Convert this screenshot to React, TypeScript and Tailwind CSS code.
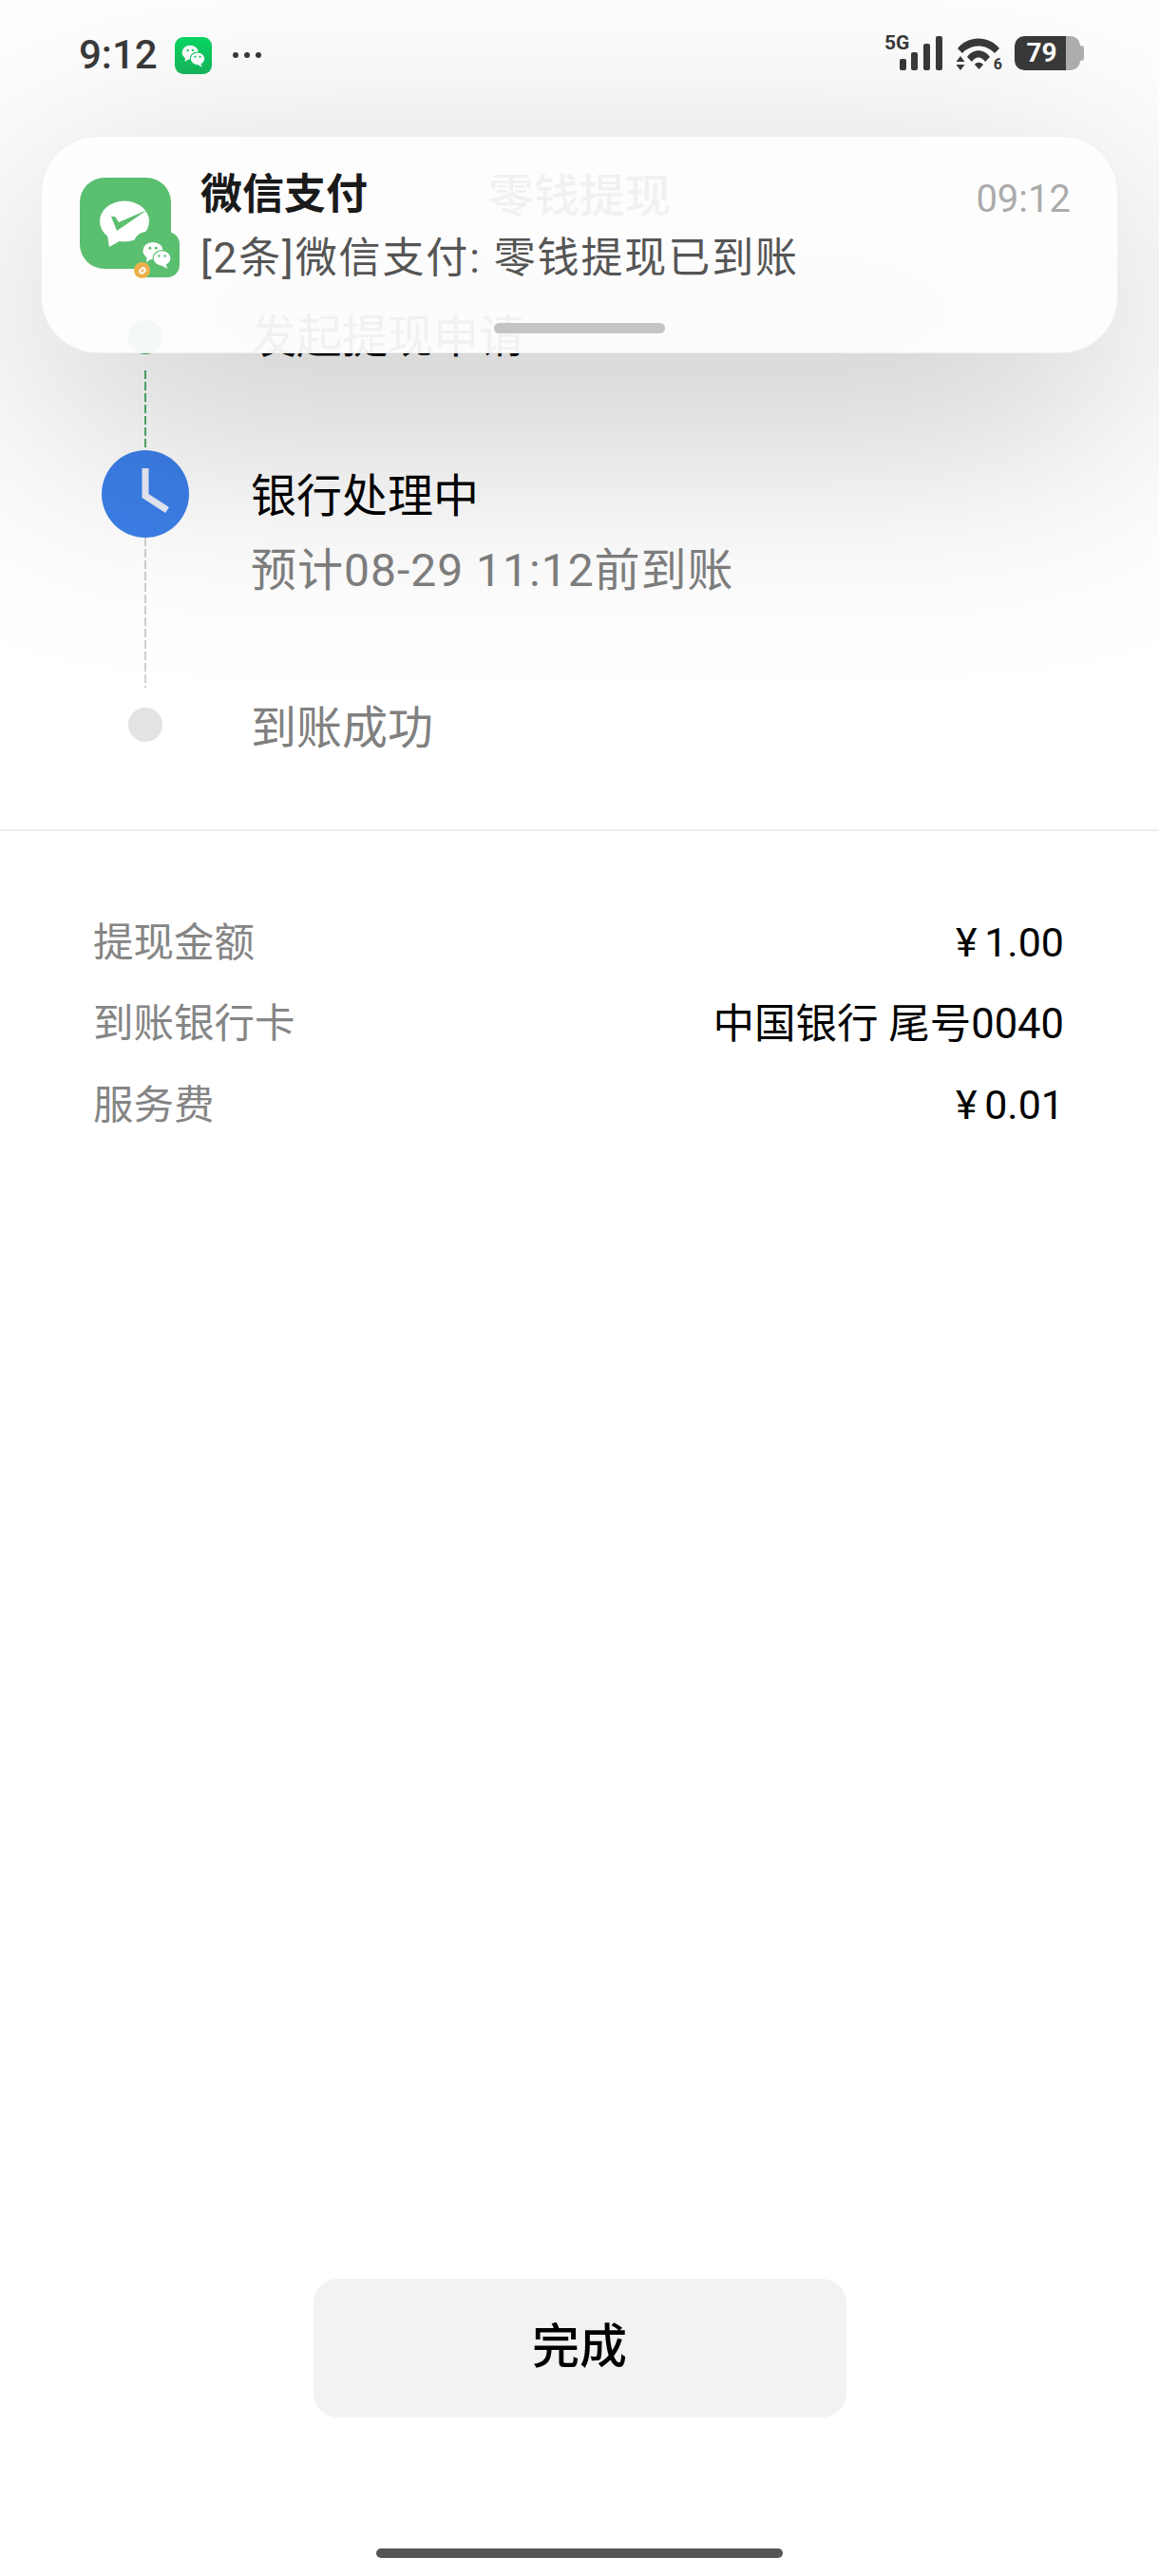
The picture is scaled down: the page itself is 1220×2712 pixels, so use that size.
import React from "react";

const font = "font-['Roboto','Noto_Sans_CJK_SC',sans-serif]";
const dash = (c: string) =>
  `repeating-linear-gradient(to bottom, ${c} 0, ${c} 9px, transparent 9px, transparent 12px)`;

function WeChatMark({ gap }: { gap: string }) {
  return (
    <svg viewBox="0 0 48 48" className="h-full w-full">
      <ellipse cx="19" cy="19" rx="13.5" ry="11.5" fill="#fff" />
      <path d="M11 27 L10 34 L18 29 Z" fill="#fff" />
      <ellipse cx="31" cy="29" rx="12" ry="10.5" fill="#fff" stroke={gap} strokeWidth="1.6" />
      <path d="M36 37 L38.5 43 L30 38.5 Z" fill="#fff" />
      <circle cx="15" cy="15.5" r="1.8" fill={gap} />
      <circle cx="23" cy="15.5" r="1.8" fill={gap} />
      <circle cx="27" cy="26" r="1.6" fill={gap} />
      <circle cx="35" cy="26" r="1.6" fill={gap} />
    </svg>
  );
}

function StatusIcons() {
  return (
    <div className="flex items-start">
      <div className="relative h-[40px] w-[61px]">
        <span className="absolute left-0 top-[-5px] text-[21px] leading-[24px] font-bold text-[#3a3a3a]">5G</span>
        <svg viewBox="0 0 61 40" className="absolute left-0 top-0 h-[40px] w-[61px]">
          <rect x="16" y="24" width="7" height="12" rx="2" fill="#3a3a3a" />
          <rect x="28" y="17" width="7" height="19" rx="2" fill="#3a3a3a" />
          <rect x="41" y="8" width="7" height="28" rx="2" fill="#3a3a3a" />
          <rect x="54" y="0" width="7" height="36" rx="2" fill="#3a3a3a" />
        </svg>
      </div>
      <div className="relative ml-[14px] h-[38px] w-[48px]">
        <svg viewBox="0 0 48 38" className="h-[38px] w-[48px]">
          <path d="M2 13 C13 -1 35 -1 46 13 L41 18 C32 8 16 8 7 18 Z" fill="#3a3a3a" />
          <path d="M12 22 C18 13 30 13 36 22 L31 27 C27 21 21 21 17 27 Z" fill="#3a3a3a" />
          <path d="M20 30 C22 27 26 27 29 30 L24.5 35 Z" fill="#3a3a3a" />
          <path d="M5 21 L9.5 27 L0.5 27 Z M0.5 30 L9.5 30 L5 36 Z" fill="#3a3a3a" />
        </svg>
        <span className="absolute right-[-1px] top-[22px] text-[16px] leading-[16px] font-bold text-[#3a3a3a]">6</span>
      </div>
      <div className="ml-[14px] flex items-center">
        <div className="flex h-[36px] w-[69px] overflow-hidden rounded-[10px] bg-[#b0b0b0]">
          <div className="flex h-full w-[54px] items-center justify-center rounded-l-[10px] bg-[#3a3a3a] pl-[3px] text-[28px] font-bold leading-none text-white">
            79
          </div>
        </div>
        <div className="h-[16px] w-[4px] rounded-r-[3px] bg-[#b0b0b0]" />
      </div>
    </div>
  );
}

function PayIcon() {
  return (
    <div className="relative mt-[10px] h-[96px] w-[96px] shrink-0 rounded-[26px] bg-[#5bbf70]">
      <svg viewBox="0 0 96 96" className="h-[96px] w-[96px]">
        <ellipse cx="47" cy="46" rx="26" ry="21.5" fill="#fff" />
        <path d="M29 60 L31 73 L45 65 Z" fill="#fff" />
        <path d="M33 41 L37 41 L41 47 L71 34 L39 56 Z" fill="#5bbf70" />
      </svg>
      <div className="absolute left-[57px] top-[57px] h-[48px] w-[48px] rounded-[13px] bg-[#5bbf70] p-[5px]">
        <WeChatMark gap="#5bbf70" />
      </div>
      <div className="absolute left-[57px] top-[89px] flex h-[17px] w-[17px] items-center justify-center rounded-full bg-[#efb04a]">
        <div className="h-[8px] w-[6px] rotate-45 rounded-full border-2 border-white" />
      </div>
    </div>
  );
}

function Row({ label, value, money }: { label: string; value: string; money?: boolean }) {
  return (
    <div className="flex h-[85.5px] items-center justify-between">
      <span className="text-[42.5px] text-[#858585]">{label}</span>
      <span className={money ? "text-[43px] text-black [word-spacing:-3px]" : "text-[43.5px] text-black"}>{value}</span>
    </div>
  );
}

export default function App() {
  return (
    <div className={`${font} relative h-[2712px] w-[1220px] overflow-hidden bg-white`}>
      {/* status bar */}
      <div className="flex h-[116px] items-center justify-between pl-[83px] pr-[79px]">
        <div className="flex items-center">
          <span className="text-[42px] font-medium leading-none text-[#3a3a3a]">9:12</span>
          <div className="ml-[18px] h-[39px] w-[39px] rounded-[9px] bg-gradient-to-b from-[#08d964] to-[#15b85c] p-[4px]">
            <WeChatMark gap="#0cc860" />
          </div>
          <div className="ml-[22px] flex gap-[6px]">
            <div className="h-[6px] w-[6px] rounded-full bg-[#3a3a3a]" />
            <div className="h-[6px] w-[6px] rounded-full bg-[#3a3a3a]" />
            <div className="h-[6px] w-[6px] rounded-full bg-[#3a3a3a]" />
          </div>
        </div>
        <StatusIcons />
      </div>

      {/* page title */}
      <div className="mt-[55px] flex h-[72px] items-center justify-center text-[48px] font-medium leading-none text-black">
        零钱提现
      </div>

      {/* timeline */}
      <div className="mt-[94px] flex pl-[107px]">
        <div className="flex w-[92px] flex-col items-center">
          <div className="h-[36px] w-[36px] rounded-full bg-[#4fb06e]" />
          <div className="mt-[17px] h-[84px] w-[2px]" style={{ background: dash("#4fae6c") }} />
          <div className="flex h-[92px] w-[92px] items-center justify-center rounded-full bg-[#3d80ea]">
            <svg viewBox="0 0 92 92" className="h-[92px] w-[92px]">
              <path d="M46 19 V48 L69 63" fill="none" stroke="#e9eef8" strokeWidth="7" />
            </svg>
          </div>
          <div className="h-[158px] w-[2px]" style={{ background: dash("#cfcfcf") }} />
          <div className="mt-[21px] h-[36px] w-[36px] rounded-full bg-[#e3e3e3]" />
        </div>
        <div className="ml-[65px] flex flex-col text-[48px] leading-none">
          <div className="flex h-[36px] items-center text-black">发起提现申请</div>
          <div className="mt-[120px] flex h-[60px] items-center text-black">银行处理中</div>
          <div className="mt-[18px] flex h-[60px] items-center tracking-[1px] text-[#808080]">预计08-29 11:12前到账</div>
          <div className="mt-[106px] flex h-[60px] items-center text-[#808080]">到账成功</div>
        </div>
      </div>

      <div className="mt-[76px] h-[2px] bg-[#eeeeee]" />

      {/* details */}
      <div className="mt-[75px] pl-[98px] pr-[100px] leading-none">
        <Row label="提现金额" value="¥ 1.00" money />
        <Row label="到账银行卡" value="中国银行 尾号0040" />
        <Row label="服务费" value="¥ 0.01" money />
      </div>

      {/* done button */}
      <div className="mt-[1192px] flex justify-center">
        <div className="flex h-[146px] w-[561px] items-center justify-center rounded-[26px] bg-[#f2f2f2] text-[50px] font-medium text-black">
          完成
        </div>
      </div>

      <div className="mt-[138px] flex justify-center">
        <div className="h-[10px] w-[428px] rounded-full bg-[#555555]" />
      </div>

      {/* soft shadow under the banner */}
      <div className="absolute left-[43px] top-[211px] h-[229px] w-[1134px] rounded-[60px] bg-black/24 blur-[130px]" />

      {/* notification banner */}
      <div className="absolute left-[43px] top-[143px] h-[229px] w-[1134px] rounded-[60px] border border-black/5 bg-[rgba(254,254,254,0.95)]">
        <div className="flex pl-[40px] pr-[49px] pt-[33px]">
          <PayIcon />
          <div className="ml-[31px] flex-1">
            <div className="flex items-start justify-between">
              <span className="text-[44px] font-bold leading-[56px] text-[#1a1a1a]">微信支付</span>
              <span className="pt-[5px] text-[40px] leading-[56px] text-[#ababab]">09:12</span>
            </div>
            <div className="mt-[6px] text-[44px] leading-[56px] tracking-[1.9px] text-[#555555]">[2条]微信支付: 零钱提现已到账</div>
          </div>
        </div>
        <div className="absolute bottom-[20px] left-[476px] h-[11px] w-[180px] rounded-full bg-[#c4c4c4]" />
      </div>
    </div>
  );
}
